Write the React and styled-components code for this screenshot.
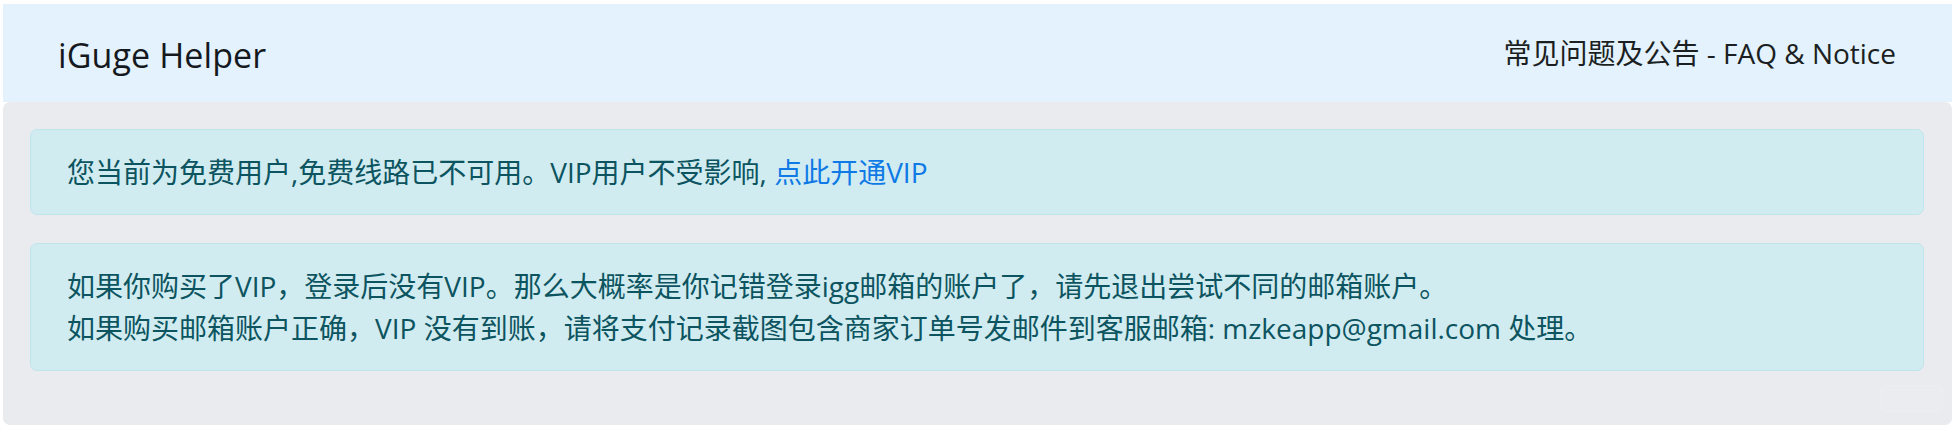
import React from "react";
import styled, { createGlobalStyle } from "styled-components";

const GlobalStyle = createGlobalStyle`
  html, body {
    margin: 0;
    padding: 0;
    background: #ffffff;
  }
  body {
    font-family: "Open Sans", "Noto Sans CJK SC", sans-serif;
    -webkit-font-smoothing: antialiased;
  }
`;

const Page = styled.div`
  padding: 4px 7px 5px 3px;
  box-sizing: border-box;
  width: 1959px;
`;

const Navbar = styled.nav`
  display: flex;
  align-items: center;
  justify-content: space-between;
  height: 98px;
  padding: 0 56px 0 55px;
  background: #e3f2fd;
`;

const Brand = styled.a`
  font-size: 34px;
  line-height: 1;
  color: #15191d;
  text-decoration: none;
  padding-top: 4px;
  letter-spacing: 0.1px;
`;

const NavLink = styled.a`
  font-size: 28px;
  line-height: 1;
  color: #1c1f22;
  text-decoration: none;
`;

const Jumbotron = styled.main`
  position: relative;
  background: #e9ebee;
  border-radius: 7px;
  padding: 27px 28px 26px 27px;
`;

const Alert = styled.div`
  background: #d1ecf1;
  border: 1px solid #bee5eb;
  color: #0c5460;
  border-radius: 7px;
  padding: 21px 35px 21px 36px;
  font-size: 28px;
  line-height: 42px;
  margin-bottom: 28px;
`;

const Link = styled.a`
  color: #0f7ae5;
  text-decoration: none;
`;

const FloatButton = styled.div`
  position: absolute;
  right: 9px;
  bottom: 13px;
  width: 63px;
  height: 27px;
  border-radius: 8px;
  background: rgba(255, 255, 255, 0.07);
  border: 1px solid rgba(255, 255, 255, 0.12);
  box-sizing: border-box;
`;

export default function App() {
  return (
    <>
      <GlobalStyle />
      <Page>
        <Navbar>
          <Brand href="#">iGuge Helper</Brand>
          <NavLink href="#">常见问题及公告 - FAQ &amp; Notice</NavLink>
        </Navbar>
        <Jumbotron>
          <Alert>
            您当前为免费用户,免费线路已不可用。VIP用户不受影响, <Link href="#">点此开通VIP</Link>
          </Alert>
          <Alert>
            如果你购买了VIP，登录后没有VIP。那么大概率是你记错登录igg邮箱的账户了，请先退出尝试不同的邮箱账户。
            <br />
            如果购买邮箱账户正确，VIP 没有到账，请将支付记录截图包含商家订单号发邮件到客服邮箱: mzkeapp@gmail.com 处理。
          </Alert>
          <FloatButton />
        </Jumbotron>
      </Page>
    </>
  );
}
